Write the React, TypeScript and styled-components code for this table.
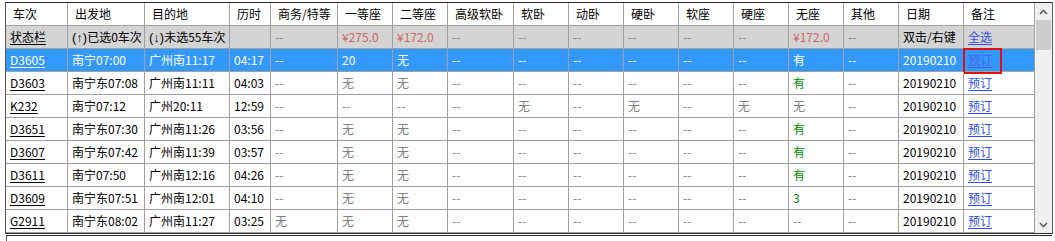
import React from "react";
import styled, { createGlobalStyle, css } from "styled-components";

const GlobalStyle = createGlobalStyle`
  * { box-sizing: border-box; }
  html, body {
    margin: 0;
    padding: 0;
    background: #ffffff;
    width: 1055px;
    height: 241px;
    overflow: hidden;
  }
  body {
    font-family: "Noto Sans CJK SC", "Noto Sans", sans-serif;
    font-size: 12px;
    color: #000;
  }
`;

// narrow arrows inside the status texts, e.g. "(↑)已选0车次"
const Arrow = styled.span`
  font-family: "Liberation Sans", "DejaVu Sans", sans-serif;
  font-size: 13px;
`;

type Kind = "text" | "train" | "dash" | "none" | "have" | "price" | "link";
type Variant = "header" | "status" | "selected" | "normal";

interface CellData {
  kind: Kind;
  value: React.ReactNode;
  marked?: boolean;
}

const columns = [
  { title: "车次", width: 62 },
  { title: "出发地", width: 77 },
  { title: "目的地", width: 85 },
  { title: "历时", width: 41 },
  { title: "商务/特等", width: 67 },
  { title: "一等座", width: 55 },
  { title: "二等座", width: 55 },
  { title: "高级软卧", width: 66 },
  { title: "软卧", width: 55 },
  { title: "动卧", width: 55 },
  { title: "硬卧", width: 55 },
  { title: "软座", width: 55 },
  { title: "硬座", width: 55 },
  { title: "无座", width: 55 },
  { title: "其他", width: 55 },
  { title: "日期", width: 65 },
  { title: "备注", width: 71 },
];

const gridTemplate = columns.map((c) => `${c.width}px`).join(" ");

const seat = (v: string): CellData => {
  if (v === "--") return { kind: "dash", value: v };
  if (v === "无") return { kind: "none", value: v };
  if (v === "有" || /^\d+$/.test(v)) return { kind: "have", value: v };
  return { kind: "text", value: v };
};

const train = (
  code: string,
  from: string,
  to: string,
  dur: string,
  seats: string[],
  marked = false
): CellData[] => [
  { kind: "train", value: code },
  { kind: "text", value: from },
  { kind: "text", value: to },
  { kind: "text", value: dur },
  ...seats.map(seat),
  { kind: "text", value: "20190210" },
  { kind: "link", value: "预订", marked },
];

const statusRow: CellData[] = [
  { kind: "train", value: "状态栏" },
  { kind: "text", value: <><Arrow>(↑)</Arrow>已选0车次</> },
  { kind: "text", value: <><Arrow>(↓)</Arrow>未选55车次</> },
  { kind: "text", value: "" },
  { kind: "dash", value: "--" },
  { kind: "price", value: "¥275.0" },
  { kind: "price", value: "¥172.0" },
  { kind: "dash", value: "--" },
  { kind: "dash", value: "--" },
  { kind: "dash", value: "--" },
  { kind: "dash", value: "--" },
  { kind: "dash", value: "--" },
  { kind: "dash", value: "--" },
  { kind: "price", value: "¥172.0" },
  { kind: "dash", value: "--" },
  { kind: "text", value: "双击/右键" },
  { kind: "link", value: "全选" },
];

const d = "--";
const trains: CellData[][] = [
  train("D3605", "南宁07:00", "广州南11:17", "04:17", [d, "20", "无", d, d, d, d, d, d, "有", d], true),
  train("D3603", "南宁东07:08", "广州南11:11", "04:03", [d, "无", "无", d, d, d, d, d, d, "有", d]),
  train("K232", "南宁07:12", "广州20:11", "12:59", [d, d, d, d, "无", d, "无", d, "无", "无", d]),
  train("D3651", "南宁东07:30", "广州南11:26", "03:56", [d, "无", "无", d, d, d, d, d, d, "有", d]),
  train("D3607", "南宁东07:42", "广州南11:39", "03:57", [d, "无", "无", d, d, d, d, d, d, "有", d]),
  train("D3611", "南宁07:50", "广州南12:16", "04:26", [d, "无", "无", d, d, d, d, d, d, "有", d]),
  train("D3609", "南宁东07:51", "广州南12:01", "04:10", [d, "无", "无", d, d, d, d, d, d, "3", d]),
  train("G2911", "南宁东08:02", "广州南11:27", "03:25", ["无", "无", "无", d, d, d, d, d, d, d, d]),
];

const App = () => {
  return (
    <>
      <GlobalStyle />
      <Frame>
        <Grid>
          <Row variant="header">
            {columns.map((c) => (
              <HeadCell key={c.title}>{c.title}</HeadCell>
            ))}
          </Row>
          <Row variant="status">
            {statusRow.map((cell, i) => (
              <Cell key={i} kind={cell.kind} variant="status">
                {cell.value}
              </Cell>
            ))}
          </Row>
          {trains.map((row, r) => {
            const variant: Variant = r === 0 ? "selected" : "normal";
            return (
              <Row key={r} variant={variant}>
                {row.map((cell, i) => (
                  <Cell key={i} kind={cell.kind} variant={variant} marked={cell.marked}>
                    {cell.value}
                    {cell.marked && <Marker />}
                  </Cell>
                ))}
              </Row>
            );
          })}
        </Grid>
        <ScrollBar>
          <ArrowButton>
            <svg width="9" height="6" viewBox="0 0 9 6">
              <polyline points="1,5 4.5,1.5 8,5" fill="none" stroke="#606060" strokeWidth="1.6" />
            </svg>
          </ArrowButton>
          <Thumb />
          <Track />
          <ArrowButton>
            <svg width="9" height="6" viewBox="0 0 9 6">
              <polyline points="1,1 4.5,4.5 8,1" fill="none" stroke="#606060" strokeWidth="1.6" />
            </svg>
          </ArrowButton>
        </ScrollBar>
      </Frame>
      <Footer />
    </>
  );
};

export default App;

const Frame = styled.div`
  display: flex;
  margin: 2px 0 0 5px;
  width: 1048px;
  border-top: 1px solid #2a2a2a;
  border-left: 1px solid #5a5a5a;
  border-right: 1px solid #5a5a5a;
  border-bottom: 1px solid #2a2a2a;
`;

const Grid = styled.div`
  display: flex;
  flex-direction: column;
  width: 1029px;
`;

const rowBg: Record<Variant, string> = {
  header: "#ffffff",
  status: "#d4d4d4",
  selected: "#3399ff",
  normal: "#ffffff",
};

const Row = styled.div<{ variant: Variant }>`
  display: grid;
  grid-template-columns: ${gridTemplate};
  height: 23px;
  border-bottom: 1px solid #a0a0a0;
  background: ${(p) => rowBg[p.variant]};
`;

const HeadCell = styled.div`
  border-right: 1px solid #a0a0a0;
  padding-left: 7px;
  line-height: 22px;
  white-space: nowrap;
  overflow: hidden;
`;

const kindColor: Record<Kind, string> = {
  text: "#000000",
  train: "#000000",
  dash: "#808080",
  none: "#808080",
  have: "#008a00",
  price: "#d06464",
  link: "#3050e8",
};

const Cell = styled.div<{ kind: Kind; variant: Variant; marked?: boolean }>`
  position: relative;
  border-right: 1px solid #a0a0a0;
  padding-left: 4px;
  line-height: 22px;
  white-space: nowrap;
  overflow: ${(p) => (p.marked ? "visible" : "hidden")};
  color: ${(p) =>
    p.variant === "selected"
      ? p.kind === "link"
        ? "#4b5fe6"
        : "#ffffff"
      : kindColor[p.kind]};
  ${(p) =>
    (p.kind === "train" || p.kind === "link") &&
    css`
      text-decoration: underline;
      text-underline-offset: 2px;
    `}
`;

const Marker = styled.span`
  position: absolute;
  left: -1px;
  top: -1px;
  width: 39px;
  height: 26px;
  border: 2px solid #e01010;
  pointer-events: none;
`;

const ScrollBar = styled.div`
  display: flex;
  flex-direction: column;
  width: 17px;
  background: #f0f0f0;
`;

const ArrowButton = styled.div`
  height: 17px;
  display: flex;
  align-items: center;
  justify-content: center;
`;

const Thumb = styled.div`
  height: 30px;
  margin: 0 1px;
  background: #cdcdcd;
`;

const Track = styled.div`
  flex: 1;
`;

const Footer = styled.div`
  margin: 1px 0 0 6px;
  width: 1046px;
  height: 10px;
  border-top: 1px solid #2a2a2a;
  border-left: 1px solid #5a5a5a;
`;
